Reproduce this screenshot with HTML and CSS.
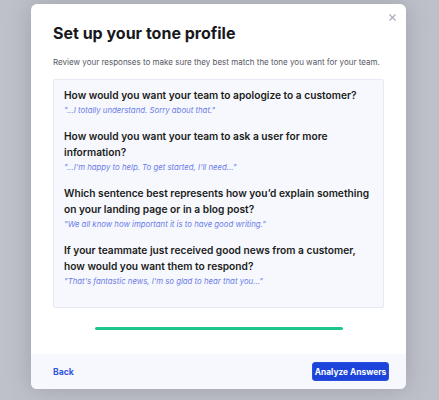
FILE: index.html
```html
<!DOCTYPE html>
<html lang="en">
<head>
  <meta charset="UTF-8">
  <title>Set up your tone profile</title>
  <link rel="stylesheet" href="styles.css">
</head>
<body>
  <div class="modal">
    <button class="close" aria-label="Close">
      <svg width="7" height="7" viewBox="0 0 7 7"><path d="M0.5 0.5L6.5 6.5M6.5 0.5L0.5 6.5" stroke="#a9acb8" stroke-width="1.1"/></svg>
    </button>
    <div class="modal-body">
      <h2>Set up your tone profile</h2>
      <p class="intro">Review your responses to make sure they best match the tone you want for your team.</p>

      <div class="answers">
        <div class="item">
          <div class="question">How would you want your team to apologize to a customer?</div>
          <div class="answer">"...I totally understand. Sorry about that."</div>
        </div>
        <div class="item">
          <div class="question">How would you want your team to ask a user for more information?</div>
          <div class="answer">"...I'm happy to help. To get started, I'll need..."</div>
        </div>
        <div class="item">
          <div class="question">Which sentence best represents how you’d explain something on your landing page or in a blog post?</div>
          <div class="answer">"We all know how important it is to have good writing."</div>
        </div>
        <div class="item">
          <div class="question">If your teammate just received good news from a customer, how would you want them to respond?</div>
          <div class="answer">"That's fantastic news, I'm so glad to hear that you..."</div>
        </div>
      </div>

      <div class="progress"></div>
    </div>

    <div class="modal-footer">
      <a href="#" class="back">Back</a>
      <button class="primary">Analyze Answers</button>
    </div>
  </div>
</body>
</html>
```

FILE: styles.css
```css
body {
  margin: 0;
  height: 400px;
  overflow: hidden;
  background: #bfc1ca;
  font-family: Inter, 'Liberation Sans', sans-serif;
}
.modal {
  position: relative;
  margin: 4px 0 0 31px;
  width: 375px;
  height: 385px;
  background: #fff;
  border-radius: 6px;
  box-shadow: 0 0 24px rgba(60,64,80,0.25);
  display: flex;
  flex-direction: column;
  overflow: hidden;
}
.close {
  position: absolute;
  top: 10px;
  right: 10px;
  border: none;
  background: none;
  padding: 0;
  width: 7px;
  height: 7px;
  display: flex;
}
.modal-body {
  flex: 1;
  padding: 19px 22px 0;
}
.modal-body h2 {
  margin: 0;
  font-size: 16px;
  line-height: 20px;
  font-weight: 700;
  color: #17181c;
}
.intro {
  margin: 14px 0 0;
  font-size: 8px;
  line-height: 11px;
  color: #55575f;
}
.answers {
  margin-top: 11px;
  background: #f7f8fe;
  border: 1px solid #e8eaf3;
  border-radius: 2px;
  padding: 7px 10px 19px;
}
.item + .item {
  margin-top: 11px;
}
.question {
  font-size: 10.2px;
  line-height: 16px;
  font-weight: 600;
  color: #1b1c20;
}
.answer {
  font-size: 7.8px;
  line-height: 14px;
  font-style: italic;
  color: #6a7de6;
}
.progress {
  margin: 19px auto 0;
  width: 248px;
  height: 3px;
  border-radius: 2px;
  background: #1ec48d;
}
.modal-footer {
  height: 35px;
  background: #f7f8fd;
  display: flex;
  align-items: center;
  justify-content: space-between;
  padding: 0 17px 0 22px;
}
.back {
  font-size: 8.6px;
  font-weight: 700;
  color: #2f55d9;
  text-decoration: none;
}
.primary {
  width: 77px;
  height: 19px;
  padding: 0;
  border: 1px solid #2c4fe0;
  border-radius: 3px;
  background: #1d44da;
  color: #fff;
  font-family: inherit;
  font-size: 8.4px;
  font-weight: 700;
  white-space: nowrap;
}
```
